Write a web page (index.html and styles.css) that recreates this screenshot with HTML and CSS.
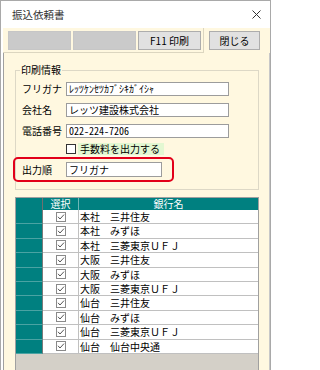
FILE: index.html
```html
<!DOCTYPE html>
<html lang="ja">
<head>
<meta charset="utf-8">
<title>振込依頼書</title>
<link rel="stylesheet" href="styles.css">
</head>
<body>
<div class="window">
  <div class="titlebar">
    <span class="title">振込依頼書</span>
    <svg class="close" viewBox="0 0 9 9"><path d="M0.5 0.5 L8.5 8.5 M8.5 0.5 L0.5 8.5" stroke="#333" stroke-width="1" fill="none"/></svg>
  </div>
  <div class="client">
    <div class="toolbar">
      <div class="tbgroup">
        <div class="btn btn-empty"></div>
        <div class="btn btn-empty"></div>
        <button class="btn">F11 印刷</button>
      </div>
      <button class="btn btn-close">閉じる</button>
    </div>
    <div class="panel">
      <fieldset class="group">
        <legend>印刷情報</legend>
        <div class="row"><span class="lbl">フリガナ</span><div class="input wide">ﾚｯﾂｹﾝｾﾂｶﾌﾞｼｷｶﾞｲｼｬ</div></div>
        <div class="row"><span class="lbl">会社名</span><div class="input wide">レッツ建設株式会社</div></div>
        <div class="row"><span class="lbl">電話番号</span><div class="input wide tel">022-224-7206</div></div>
        <div class="chkrow"><span class="chk"></span><span class="chklbl">手数料を出力する</span></div>
        <div class="order"><span class="lbl">出力順</span><div class="input narrow">フリガナ</div></div>
      </fieldset>
      <div class="grid">
        <div class="grow ghead"><div class="h1"></div><div class="h2">選択</div><div class="h3">銀行名</div></div>
        <div class="grow"><div class="c1"></div><div class="c2"><svg class="gchk" viewBox="0 0 10 10"><rect x="0.5" y="0.5" width="9" height="9" fill="#fff" stroke="#8a8a8a"/><path d="M2 4.8 L4 7 L8 2.6" fill="none" stroke="#555"/></svg></div><div class="c3">本社　三井住友</div></div>
        <div class="grow"><div class="c1"></div><div class="c2"><svg class="gchk" viewBox="0 0 10 10"><rect x="0.5" y="0.5" width="9" height="9" fill="#fff" stroke="#8a8a8a"/><path d="M2 4.8 L4 7 L8 2.6" fill="none" stroke="#555"/></svg></div><div class="c3">本社　みずほ</div></div>
        <div class="grow"><div class="c1"></div><div class="c2"><svg class="gchk" viewBox="0 0 10 10"><rect x="0.5" y="0.5" width="9" height="9" fill="#fff" stroke="#8a8a8a"/><path d="M2 4.8 L4 7 L8 2.6" fill="none" stroke="#555"/></svg></div><div class="c3">本社　三菱東京ＵＦＪ</div></div>
        <div class="grow"><div class="c1"></div><div class="c2"><svg class="gchk" viewBox="0 0 10 10"><rect x="0.5" y="0.5" width="9" height="9" fill="#fff" stroke="#8a8a8a"/><path d="M2 4.8 L4 7 L8 2.6" fill="none" stroke="#555"/></svg></div><div class="c3">大阪　三井住友</div></div>
        <div class="grow"><div class="c1"></div><div class="c2"><svg class="gchk" viewBox="0 0 10 10"><rect x="0.5" y="0.5" width="9" height="9" fill="#fff" stroke="#8a8a8a"/><path d="M2 4.8 L4 7 L8 2.6" fill="none" stroke="#555"/></svg></div><div class="c3">大阪　みずほ</div></div>
        <div class="grow"><div class="c1"></div><div class="c2"><svg class="gchk" viewBox="0 0 10 10"><rect x="0.5" y="0.5" width="9" height="9" fill="#fff" stroke="#8a8a8a"/><path d="M2 4.8 L4 7 L8 2.6" fill="none" stroke="#555"/></svg></div><div class="c3">大阪　三菱東京ＵＦＪ</div></div>
        <div class="grow"><div class="c1"></div><div class="c2"><svg class="gchk" viewBox="0 0 10 10"><rect x="0.5" y="0.5" width="9" height="9" fill="#fff" stroke="#8a8a8a"/><path d="M2 4.8 L4 7 L8 2.6" fill="none" stroke="#555"/></svg></div><div class="c3">仙台　三井住友</div></div>
        <div class="grow"><div class="c1"></div><div class="c2"><svg class="gchk" viewBox="0 0 10 10"><rect x="0.5" y="0.5" width="9" height="9" fill="#fff" stroke="#8a8a8a"/><path d="M2 4.8 L4 7 L8 2.6" fill="none" stroke="#555"/></svg></div><div class="c3">仙台　みずほ</div></div>
        <div class="grow"><div class="c1"></div><div class="c2"><svg class="gchk" viewBox="0 0 10 10"><rect x="0.5" y="0.5" width="9" height="9" fill="#fff" stroke="#8a8a8a"/><path d="M2 4.8 L4 7 L8 2.6" fill="none" stroke="#555"/></svg></div><div class="c3">仙台　三菱東京ＵＦＪ</div></div>
        <div class="grow"><div class="c1"></div><div class="c2"><svg class="gchk" viewBox="0 0 10 10"><rect x="0.5" y="0.5" width="9" height="9" fill="#fff" stroke="#8a8a8a"/><path d="M2 4.8 L4 7 L8 2.6" fill="none" stroke="#555"/></svg></div><div class="c3">仙台　仙台中央通</div></div>
      </div>
    </div>
  </div>
</div>
</body>
</html>
```

FILE: styles.css
```css
body {
  margin: 0;
  background: #fff;
  font-family: "Noto Sans CJK JP", sans-serif;
  font-size: 10px;
  color: #000;
}

.window {
  box-sizing: border-box;
  width: 271px;
  height: 370px;
  border: 1px solid #a9a9a9;
  border-bottom: none;
  overflow: hidden;
  background: #fff;
}

.titlebar {
  height: 27px;
  display: flex;
  align-items: center;
  padding: 0 9px 0 11px;
}

.title {
  font-size: 10.5px;
  color: #333;
  line-height: 14px;
}

.close {
  margin-left: auto;
  width: 9px;
  height: 9px;
}

.client {
  margin-left: 2px;
  background: #fff8e0;
  height: 342px;
}

.toolbar {
  display: flex;
  height: 25px;
}

.tbgroup {
  box-sizing: border-box;
  width: 201px;
  height: 25px;
  border-right: 1px solid #dcd6c0;
  border-bottom: 1px solid #dcd6c0;
  display: flex;
  gap: 2px;
  padding: 3px 0 0 5px;
}

.btn {
  box-sizing: border-box;
  width: 63px;
  height: 19px;
  border: 1px solid #adadad;
  background: #e1e1e1;
  font: inherit;
  font-size: 10px;
  color: #000;
  padding: 0;
  margin: 0;
  display: flex;
  align-items: center;
  justify-content: center;
}

.btn-empty {
  background: #cacaca;
  border-color: #c6c6c6;
}

.btn-close {
  width: 51px;
  margin: 3px 0 0 5px;
}

.panel {
  box-sizing: border-box;
  border-left: 1px solid #a0a0a0;
  border-right: 1px solid #c8c8c8;
  height: 317px;
  padding-top: 11px;
}

.group {
  box-sizing: border-box;
  width: 244px;
  margin: 0 0 0 11px;
  border: 1px solid #ddd8c6;
  padding: 2px 0 7px 6px;
  min-width: 0;
}

.group legend {
  padding: 0 1px;
  margin-left: -2px;
  line-height: 12px;
  font-size: 10px;
}

.row {
  display: flex;
  align-items: center;
  height: 21px;
}

.lbl {
  width: 44px;
  flex: none;
  line-height: 12px;
}

.input {
  box-sizing: border-box;
  height: 14px;
  border: 1px solid #9c9c9c;
  background: #fff;
  padding-left: 2px;
  line-height: 12px;
  white-space: nowrap;
  overflow: hidden;
}

.wide {
  width: 163px;
}

.narrow {
  width: 96px;
  height: 15px;
  line-height: 13px;
}

.tel {
  font-feature-settings: "hwid" 1;
}

.chkrow {
  display: flex;
  align-items: center;
  height: 16px;
  padding-left: 44px;
}

.chk {
  box-sizing: border-box;
  width: 10px;
  height: 10px;
  border: 1px solid #333;
  background: #fff;
}

.chklbl {
  margin-left: 2px;
  background: #e3f8d2;
  height: 12px;
  line-height: 12px;
  padding: 0 4px 0 2px;
}

.order {
  box-sizing: border-box;
  margin-left: -9px;
  width: 161px;
  height: 25px;
  border: 2px solid #e2001a;
  border-radius: 5px;
  display: flex;
  align-items: center;
  padding-left: 7px;
}

.grid {
  box-sizing: border-box;
  width: 244px;
  margin: 7px 0 0 11px;
  border: 1px solid #a0a0a0;
  background: #d4d0c8;
  height: 190px;
}

.grow {
  display: grid;
  grid-template-columns: 27px 36px 1fr;
  height: 14.4px;
}

.grow > div {
  box-sizing: border-box;
}

.ghead {
  height: 12px;
  background: #008080;
  color: #fff;
  line-height: 12px;
}

.h1 {
  border-right: 1px solid #6f6f6f;
}

.h2 {
  border-right: 1px solid #6fb7b7;
  text-align: center;
}

.h3 {
  text-align: center;
}

.c1 {
  background: #008080;
  border-right: 1px solid #7a7a7a;
  border-bottom: 1px solid #4aa3a3;
}

.c2 {
  background: #fff;
  border-right: 1px solid #c0c0c0;
  border-bottom: 1px solid #c0c0c0;
  display: flex;
  align-items: center;
  justify-content: center;
}

.c3 {
  background: #fff;
  border-bottom: 1px solid #c0c0c0;
  padding-left: 1px;
  line-height: 13px;
  white-space: pre;
}

.gchk {
  width: 10px;
  height: 10px;
}
```
